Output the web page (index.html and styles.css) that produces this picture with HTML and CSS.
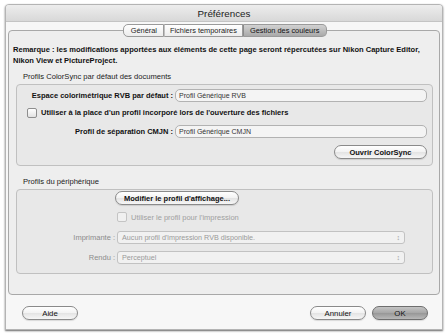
FILE: index.html
```html
<!DOCTYPE html>
<html lang="fr">
<head>
<meta charset="utf-8">
<title>Préférences</title>
<link rel="stylesheet" href="styles.css">
</head>
<body>
<div class="win">
  <div class="titlebar">Préférences</div>
  <div class="wbody">
    <div class="tabs">
      <span class="tab first">Général</span><span class="tab">Fichiers temporaires</span><span class="tab sel last">Gestion des couleurs</span>
    </div>
    <div class="panel">
      <p class="note">Remarque : les modifications apportées aux éléments de cette page seront répercutées sur Nikon Capture Editor, Nikon View et PictureProject.</p>
      <div class="glabel">Profils ColorSync par défaut des documents</div>
      <div class="group g1">
        <div class="row r1"><span class="lbl">Espace colorimétrique RVB par défaut :</span><span class="field">Profil Générique RVB</span></div>
        <div class="check c1"><span class="box"></span><span>Utiliser à la place d'un profil incorporé lors de l'ouverture des fichiers</span></div>
        <div class="row r2"><span class="lbl">Profil de séparation CMJN :</span><span class="field">Profil Générique CMJN</span></div>
        <div class="btnrow"><span class="btn wide">Ouvrir ColorSync</span></div>
      </div>
      <div class="glabel gl2">Profils du périphérique</div>
      <div class="group g2">
        <div class="row2"><span></span><span class="btn modif">Modifier le profil d'affichage...</span></div>
        <div class="row2 rc"><span></span><span class="check dis"><span class="box"></span><span>Utiliser le profil pour l'impression</span></span></div>
        <div class="row2 rp1"><span class="lbl dis">Imprimante :</span><span class="popup">Aucun profil d'impression RVB disponible.<span class="arr">&#x2195;</span></span></div>
        <div class="row2 rp2"><span class="lbl dis">Rendu :</span><span class="popup">Perceptuel<span class="arr">&#x2195;</span></span></div>
      </div>
    </div>
    <div class="footer">
      <span class="btn fbtn">Aide</span>
      <span class="spacer"></span>
      <span class="btn fbtn">Annuler</span>
      <span class="btn fbtn ok">OK</span>
    </div>
  </div>
</div>
</body>
</html>
```

FILE: styles.css
```css
* { box-sizing: border-box; }
html, body { margin: 0; padding: 0; }
body {
  background: #ffffff;
  font-family: "Liberation Sans", Arial, sans-serif;
  color: #111;
  width: 448px;
  height: 334px;
  overflow: hidden;
}
.win {
  margin: 4px 0 0 5px;
  width: 438px;
  height: 326px;
  border: 1px solid #b4b4b4;
  border-radius: 4px 4px 0 0;
  background: #f7f7f7;
  box-shadow: 0 1px 2px rgba(0,0,0,0.6);
  display: flex;
  flex-direction: column;
}
.titlebar {
  height: 17px;
  background: linear-gradient(#ededed, #d8d8d8);
  border-bottom: 1px solid #c4c4c4;
  border-radius: 3px 3px 0 0;
  text-align: center;
  font-size: 9.8px;
  line-height: 17px;
  color: #222;
}
.wbody {
  flex: 1;
  padding: 2px 2px 0 2px;
  display: flex;
  flex-direction: column;
}
.tabs {
  display: flex;
  justify-content: center;
  height: 13px;
  position: relative;
  z-index: 2;
  margin-left: 2px;
}
.tab {
  font-size: 7.4px;
  line-height: 11px;
  height: 13px;
  padding: 0 5px;
  border: 1px solid #9a9a9a;
  border-left: 1px solid #c0c0c0;
  background: linear-gradient(#ffffff, #ececec);
  color: #222;
}
.tab.first { border-left: 1px solid #9a9a9a; border-radius: 5px 0 0 5px; padding: 0 6px 0 7px; }
.tab.last { border-radius: 0 5px 5px 0; padding: 0 7px 0 6px; }
.tab.sel {
  background: linear-gradient(#d2d2d2, #a9a9a9);
  border-left-color: #8a8a8a;
  color: #111;
}
.panel {
  margin-top: -7px;
  height: 265px;
  border: 1px solid #a8a8a8;
  border-radius: 4px;
  background: #eeeeee;
  padding: 13px 6px 0 7px;
  display: flex;
  flex-direction: column;
}
.note {
  margin: 0 0 0 -3px;
  font-size: 7.55px;
  font-weight: bold;
  line-height: 11px;
}
.glabel {
  font-size: 7.6px;
  line-height: 10px;
  margin: 6px 0 2px 7px;
  color: #222;
}
.gl2 { margin-top: 11px; }
.group {
  border: 1px solid #c0c0c0;
  border-radius: 4px;
  background: #e8e8e8;
  display: flex;
  flex-direction: column;
}
.g1 { padding: 4px 5px 6px 5px; height: 82px; }
.row {
  display: grid;
  grid-template-columns: 151px 1fr;
  column-gap: 2px;
  align-items: center;
  height: 13px;
}
.lbl {
  text-align: right;
  font-size: 7.5px;
  font-weight: bold;
  white-space: nowrap;
}
.lbl.dis { color: #8c8c8c; font-weight: normal; }
.field {
  height: 13px;
  border: 1px solid #b2b2b2;
  border-radius: 5px;
  background: #f4f4f4;
  font-size: 7px;
  line-height: 11px;
  padding-left: 3px;
  color: #333;
}
.check {
  display: flex;
  align-items: center;
  gap: 4px;
  font-size: 7.5px;
  font-weight: bold;
  white-space: nowrap;
}
.c1 { margin: 5px 0 0 5px; height: 11px; }
.r2 { margin-top: 7px; }
.box {
  width: 10px;
  height: 10px;
  border: 1px solid #8e8e8e;
  border-radius: 2px;
  background: linear-gradient(#ffffff, #e2e2e2);
  flex: none;
}
.check.dis { color: #a0a0a0; font-weight: normal; }
.check.dis .box { border-color: #c4c4c4; background: #f0f0f0; }
.btnrow { display: flex; justify-content: flex-end; margin-top: 7px; }
.btn {
  display: inline-flex;
  align-items: center;
  justify-content: center;
  height: 14px;
  border: 1px solid #8a8a8a;
  border-radius: 7px;
  background: linear-gradient(#ffffff 0%, #f2f2f2 50%, #e3e3e3 51%, #f6f6f6 100%);
  font-size: 7.5px;
  font-weight: bold;
  white-space: nowrap;
  color: #111;
  box-shadow: 0 1px 1px rgba(0,0,0,0.12);
}
.wide { width: 93px; }
.g2 { padding: 1px 0 0 6px; height: 85px; }
.row2 {
  display: grid;
  grid-template-columns: 92px 288px;
  column-gap: 2px;
  align-items: center;
}
.modif { width: 124px; margin-left: -2px; }
.rc { margin-top: 7px; height: 10px; }
.rp1 { margin-top: 9px; }
.rp2 { margin-top: 7px; }
.popup {
  position: relative;
  height: 13px;
  border: 1px solid #c2c2c2;
  border-radius: 3px;
  background: #f1f1f1;
  font-size: 7.2px;
  line-height: 11px;
  padding-left: 4px;
  color: #9a9a9a;
}
.arr {
  position: absolute;
  right: 4px;
  top: 0;
  font-size: 7px;
  line-height: 11px;
  color: #9a9a9a;
}
.footer {
  display: flex;
  align-items: center;
  padding: 11px 12px 0 14px;
  gap: 6px;
}
.spacer { flex: 1; }
.fbtn { width: 56px; font-weight: normal; font-size: 7.8px; }
.ok {
  background: linear-gradient(#c4c4c4 0%, #a6a6a6 50%, #979797 51%, #b8b8b8 100%);
  border-color: #6e6e6e;
}
```
